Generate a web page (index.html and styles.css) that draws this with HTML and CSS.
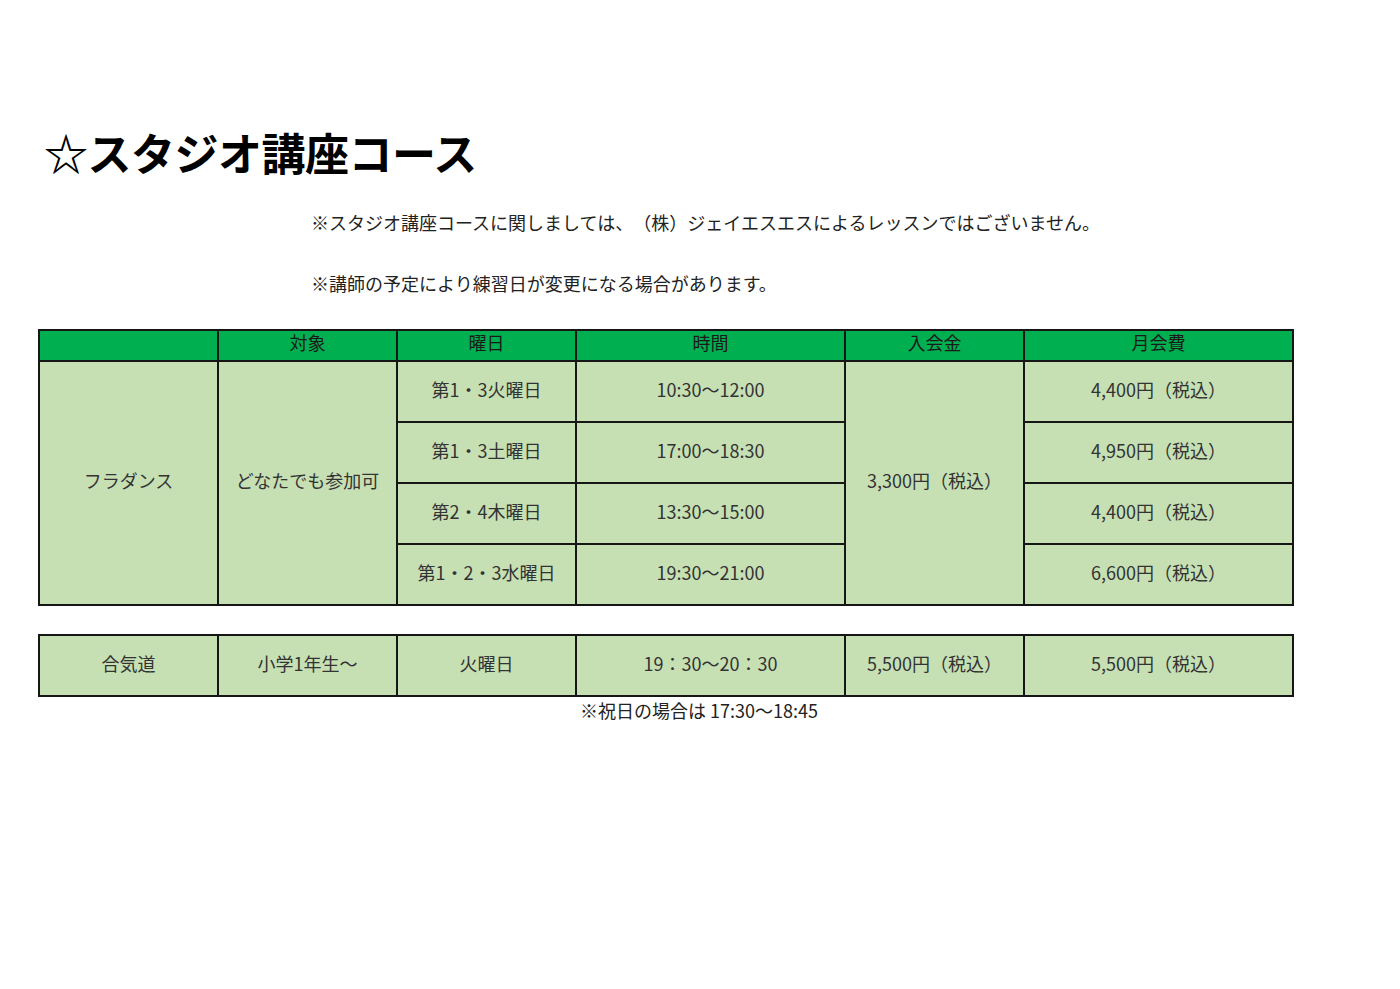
FILE: index.html
```html
<!DOCTYPE html>
<html lang="ja">
<head>
<meta charset="utf-8">
<link rel="stylesheet" href="styles.css">
</head>
<body>
<main class="page">
  <h1 class="title">☆スタジオ講座コース</h1>
  <p class="note note-first">※スタジオ講座コースに関しましては、（株）ジェイエスエスによるレッスンではございません。</p>
  <p class="note note-second">※講師の予定により練習日が変更になる場合があります。</p>

  <table class="course">
    <colgroup>
      <col class="c-s"><col class="c-s"><col class="c-s"><col class="c-w"><col class="c-s"><col class="c-w">
    </colgroup>
    <thead>
      <tr class="head">
        <th></th><th>対象</th><th>曜日</th><th>時間</th><th>入会金</th><th>月会費</th>
      </tr>
    </thead>
    <tbody>
      <tr class="row">
        <td rowspan="4">フラダンス</td>
        <td rowspan="4">どなたでも参加可</td>
        <td>第1・3火曜日</td>
        <td>10:30～12:00</td>
        <td rowspan="4">3,300円（税込）</td>
        <td>4,400円（税込）</td>
      </tr>
      <tr class="row">
        <td>第1・3土曜日</td>
        <td>17:00～18:30</td>
        <td>4,950円（税込）</td>
      </tr>
      <tr class="row">
        <td>第2・4木曜日</td>
        <td>13:30～15:00</td>
        <td>4,400円（税込）</td>
      </tr>
      <tr class="row">
        <td>第1・2・3水曜日</td>
        <td>19:30～21:00</td>
        <td>6,600円（税込）</td>
      </tr>
    </tbody>
  </table>

  <table class="course course-second">
    <colgroup>
      <col class="c-s"><col class="c-s"><col class="c-s"><col class="c-w"><col class="c-s"><col class="c-w">
    </colgroup>
    <tbody>
      <tr class="row">
        <td>合気道</td>
        <td>小学1年生～</td>
        <td>火曜日</td>
        <td>19：30～20：30</td>
        <td>5,500円（税込）</td>
        <td>5,500円（税込）</td>
      </tr>
      <tr class="foot">
        <td colspan="3"></td>
        <td colspan="3" class="foot-text">※祝日の場合は 17:30～18:45</td>
      </tr>
    </tbody>
  </table>
</main>
</body>
</html>
```

FILE: styles.css
```css
html, body {
  margin: 0;
  padding: 0;
  background: #ffffff;
}

body {
  font-family: "Noto Sans CJK JP", "Noto Sans", sans-serif;
  color: #222222;
  text-spacing-trim: space-all;
}

.page {
  padding: 126px 0 0 38px;
}

.title {
  margin: 0;
  padding-left: 6px;
  font-size: 44px;
  line-height: 53px;
  font-weight: 700;
  color: #000000;
  letter-spacing: -0.5px;
}

.note {
  margin: 0;
  padding-left: 273px;
  font-size: 18px;
  line-height: 24px;
  color: #222222;
}

.note-first {
  margin-top: 31px;
}

.note-second {
  margin-top: 37px;
}

.course {
  border-collapse: collapse;
  table-layout: fixed;
  width: 1254px;
  margin-top: 34px;
  font-size: 18px;
}

.course-second {
  margin-top: 28px;
}

.c-s { width: 179px; }
.c-w { width: 269px; }

.course th,
.course td {
  border: 2px solid #161616;
  text-align: center;
  vertical-align: middle;
  padding: 0;
  font-weight: 400;
  white-space: nowrap;
}

.head th {
  background: #00b050;
  height: 29px;
  line-height: 23px;
  padding-bottom: 6px;
  box-sizing: border-box;
  color: #1a1a1a;
}

.row td {
  background: #c6e0b4;
  height: 53px;
  padding-bottom: 6px;
  color: #333333;
}

.foot td {
  border: none;
  background: transparent;
  height: 26px;
  padding-bottom: 5px;
}

.foot-text {
  text-align: left !important;
  padding-left: 4px !important;
  color: #222222;
}
```
